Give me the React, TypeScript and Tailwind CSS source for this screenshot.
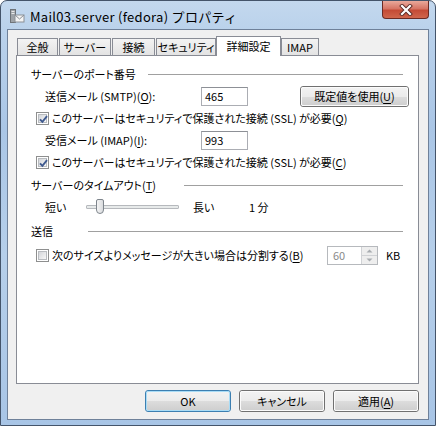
import React from "react";

const F = "font-['Noto_Sans_CJK_JP','Noto_Sans',sans-serif] [font-feature-settings:'palt']";

function U({ children }: { children: React.ReactNode }) {
  return <span className="underline underline-offset-[2px] decoration-[1px]">{children}</span>;
}

function CheckBox({ checked }: { checked: boolean }) {
  return (
    <div className="relative w-[13px] h-[13px] border border-[#8e8f8f] bg-white p-px shrink-0">
      <div className="w-full h-full border border-[#b9bcc0] bg-[linear-gradient(135deg,#d4d6da,#f7f7f7)]" />
      {checked && (
        <svg className="absolute left-0 top-0" width="13" height="13" viewBox="0 0 13 13">
          <path d="M3 6.3 L5.4 8.8 L10 3.2" fill="none" stroke="#3f5a8f" strokeWidth="1.9" />
        </svg>
      )}
    </div>
  );
}

function Header({ text, lineW }: { text: React.ReactNode; lineW: string }) {
  return (
    <div className="h-[22px] flex items-center justify-between pl-[14px] pr-[15px]">
      <span>{text}</span>
      <div className={lineW}>
        <div className="h-px bg-[#a0a0a0]" />
      </div>
    </div>
  );
}

function WinButton({ children, def }: { children: React.ReactNode; def?: boolean }) {
  return (
    <div
      className={
        def
          ? "w-[86px] h-[22px] rounded-[3px] border border-[#3c7fb1] bg-[#c4e5f6]"
          : "w-[86px] h-[22px] rounded-[3px] border border-[#707070] bg-white"
      }
    >
      <div
        className={
          def
            ? "h-full w-full rounded-[2px] border border-[#a9dcf6] bg-[linear-gradient(#f2f2f2_0%,#ebebeb_50%,#dddddd_50%,#cfcfcf_100%)] flex items-center justify-center leading-none"
            : "h-full w-full rounded-[2px] border border-[#fbfbfb] bg-[linear-gradient(#f2f2f2_0%,#ebebeb_50%,#dddddd_50%,#cfcfcf_100%)] flex items-center justify-center leading-none"
        }
      >
        {children}
      </div>
    </div>
  );
}

function Tab({ label, w, selected }: { label: string; w: string; selected?: boolean }) {
  if (selected) {
    return (
      <div
        className={`${w} h-[20px] -mb-px relative z-10 border border-b-0 border-[#898c95] bg-white flex items-center justify-center pb-[1px]`}
      >
        {label}
      </div>
    );
  }
  return (
    <div
      className={`${w} h-[17px] border border-b-0 border-[#898c95] bg-[linear-gradient(#f3f3f3,#e3e3e3)] flex items-center justify-center`}
    >
      {label}
    </div>
  );
}

export default function App() {
  return (
    <div className={`${F} text-[11px] text-black leading-none`}>
      <div className="relative w-[436px] h-[426px] rounded-t-[7px] border border-[#44546a] bg-[linear-gradient(180deg,#c3d8ee_0%,#b9d1eb_8%,#aac6e6_30%,#b6cfea_60%,#a8c5e6_100%)] flex flex-col">
        {/* title bar */}
        <div className="h-[28px] flex items-center pl-[8px] shrink-0">
          <svg width="16" height="16" viewBox="0 0 16 16" className="mr-[4px] mt-[1px]">
            <rect x="1" y="1" width="6" height="14" fill="#6e7378" />
            <rect x="2" y="2" width="4" height="12" fill="#9ea3a8" />
            <rect x="2.5" y="3" width="3" height="1" fill="#e8e8e8" />
            <rect x="2.5" y="5" width="3" height="1" fill="#e8e8e8" />
            <rect x="6" y="7" width="9" height="7" fill="#f4f4f4" stroke="#8a8f96" strokeWidth="1" />
            <path d="M6 7 L10.5 11 L15 7" fill="none" stroke="#8a8f96" strokeWidth="1" />
          </svg>
          <span className="text-[13px] [font-feature-settings:normal] tracking-[0.3px] text-black pl-[1px] mt-[2px]">
            Mail03.server (fedora) プロパティ
          </span>
        </div>
        {/* close button */}
        <div className="absolute top-0 right-[6px] w-[47px] h-[18px] rounded-b-[4px] border border-t-0 border-[#6b2b24] bg-[linear-gradient(#e9a99b_0%,#d67565_45%,#c44b36_55%,#d0664c_100%)] flex items-center justify-center">
          <svg width="14" height="12" viewBox="0 0 14 12">
            <path d="M3 2 L11 10 M11 2 L3 10" stroke="#5a2a25" strokeWidth="4" strokeLinecap="square" />
            <path d="M3 2 L11 10 M11 2 L3 10" stroke="#ffffff" strokeWidth="2.2" strokeLinecap="square" />
          </svg>
        </div>
        {/* client */}
        <div className="mx-[6px] mb-[5px] flex-1 border border-[#6f819a] bg-[#f0f0f0] flex flex-col pt-[6px] pl-[8px] pr-[9px]">
          {/* tabs */}
          <div className="h-[19px] flex items-end pl-[1px]">
            <Tab label="全般" w="w-[41px]" />
            <div className="w-px" />
            <Tab label="サーバー" w="w-[52px]" />
            <div className="w-px" />
            <Tab label="接続" w="w-[43px]" />
            <div className="w-px" />
            <Tab label="セキュリティ" w="w-[60px]" />
            <Tab label="詳細設定" w="w-[65px]" selected />
            <Tab label="IMAP" w="w-[38px]" />
          </div>
          {/* panel */}
          <div className="h-[329px] border border-[#898c95] bg-white pt-[7px] flex flex-col">
            <Header text="サーバーのポート番号" lineW="w-[255px]" />
            <div className="h-[22px] flex items-center pl-[28px]">
              <span className="w-[156px]">
                送信メール (SMTP)(<U>O</U>):
              </span>
              <div className="w-[47px] h-[19px] border border-[#abadb3] border-t-[#8d9096] bg-white flex items-center pl-[3px]">465</div>
              <div className="ml-[52px]">
                <div className="w-[109px] h-[21px] rounded-[3px] border border-[#707070] bg-white">
                  <div className="h-full w-full rounded-[2px] border border-[#fbfbfb] bg-[linear-gradient(#f2f2f2_0%,#ebebeb_50%,#dddddd_50%,#cfcfcf_100%)] flex items-center justify-center">
                    既定値を使用(<U>U</U>)
                  </div>
                </div>
              </div>
            </div>
            <div className="h-[22px] flex items-center pl-[19px] gap-[3px]">
              <CheckBox checked />
              <span>
                このサーバーはセキュリティで保護された接続 (SSL) が必要(<U>Q</U>)
              </span>
            </div>
            <div className="h-[22px] flex items-center pl-[28px]">
              <span className="w-[156px]">
                受信メール (IMAP)(<U>I</U>):
              </span>
              <div className="w-[47px] h-[19px] border border-[#abadb3] border-t-[#8d9096] bg-white flex items-center pl-[3px]">993</div>
            </div>
            <div className="h-[22px] flex items-center pl-[19px] gap-[3px]">
              <CheckBox checked />
              <span>
                このサーバーはセキュリティで保護された接続 (SSL) が必要(<U>C</U>)
              </span>
            </div>
            <div className="mt-[1px]">
              <Header text={<>サーバーのタイムアウト(<U>T</U>)</>} lineW="w-[219px]" />
            </div>
            <div className="h-[22px] flex items-center pl-[28px]">
              <span className="w-[41px]">短い</span>
              <div className="relative w-[93px] h-[22px]">
                <div className="absolute left-0 right-0 top-[9px] h-[4px] border border-[#b6b9bd] bg-[#e7eaea] rounded-[1px]" />
                <div className="absolute left-[10px] top-[3px] w-[8px] h-[15px] rounded-[2px] rounded-b-[4px] border border-[#7e858c] bg-[linear-gradient(90deg,#f4f4f4,#d9dbde)]" />
              </div>
              <span className="ml-[14px] w-[56px]">長い</span>
              <span>1 分</span>
            </div>
            <div className="mt-[2px]">
              <Header text="送信" lineW="w-[315px]" />
            </div>
            <div className="mt-[2px] h-[22px] flex items-center pl-[19px]">
              <CheckBox checked={false} />
              <span className="ml-[3px] w-[275px]">
                次のサイズよりメッセージが大きい場合は分割する(<U>B</U>)
              </span>
              <div className="w-[51px] h-[19px] border border-[#b6b9bd] bg-white flex items-center">
                <span className="flex-1 pl-[5px] text-[#8a8a8a]">60</span>
                <div className="w-[16px] h-full flex flex-col border-l border-[#d0d2d5]">
                  <div className="flex-1 bg-[#eeeeee] border-b border-[#d0d2d5] flex items-center justify-center">
                    <svg width="7" height="4" viewBox="0 0 7 4">
                      <path d="M0.5 3.5 L3.5 0.5 L6.5 3.5 Z" fill="#a8acb0" />
                    </svg>
                  </div>
                  <div className="flex-1 bg-[#eeeeee] flex items-center justify-center">
                    <svg width="7" height="4" viewBox="0 0 7 4">
                      <path d="M0.5 0.5 L3.5 3.5 L6.5 0.5 Z" fill="#a8acb0" />
                    </svg>
                  </div>
                </div>
              </div>
              <span className="ml-[8px]">KB</span>
            </div>
          </div>
          {/* buttons */}
          <div className="mt-[6px] flex justify-end gap-[8px] pr-[0px]">
            <WinButton def>OK</WinButton>
            <WinButton>キャンセル</WinButton>
            <WinButton>
              適用(<U>A</U>)
            </WinButton>
          </div>
        </div>
      </div>
    </div>
  );
}
